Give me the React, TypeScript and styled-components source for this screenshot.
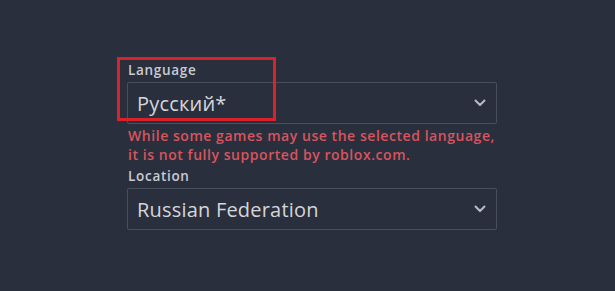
import React from "react";
import styled, { createGlobalStyle } from "styled-components";

const Global = createGlobalStyle`
  html, body { margin: 0; padding: 0; background: #2a2f3e; }
  body { font-family: "Open Sans", Lato, sans-serif; width: 615px; height: 291px; overflow: hidden; }
`;

const Page = styled.div`
  width: 615px;
  height: 291px;
  box-sizing: border-box;
  padding: 62px 0 0 127px;
  display: flex;
  flex-direction: column;
`;

const Field = styled.div`
  position: relative;
  display: flex;
  flex-direction: column;
  width: 370px;
`;

const Label = styled.div`
  font-size: 13.5px;
  font-weight: 600;
  color: #c9cbd0;
  line-height: 17px;
  padding-left: 1px;
  margin-bottom: 3px;
  letter-spacing: 0.7px;
`;

const Select = styled.div`
  height: 42px;
  box-sizing: border-box;
  border: 1.5px solid #4a4f5c;
  border-radius: 2px;
  display: flex;
  align-items: center;
  justify-content: space-between;
  padding: 0 9px 0 9px;
`;

const Value = styled.span`
  font-size: 20px;
  font-weight: 500;
  color: #d4d6da;
  letter-spacing: 0.2px;
`;

const Chevron = styled.svg`
  width: 12px;
  height: 8px;
  margin-right: 1px;
`;

const ErrorText = styled.div`
  font-size: 14px;
  font-weight: 600;
  color: #d9545c;
  line-height: 19px;
  margin-top: 2px;
  padding-left: 1px;
  letter-spacing: 0.55px;
  white-space: nowrap;
`;

const Highlight = styled.div`
  position: absolute;
  left: -10px;
  top: -5px;
  width: 159px;
  height: 64px;
  box-sizing: border-box;
  border: 3px solid #d8232c;
  pointer-events: none;
`;

const Spacer = styled.div`
  height: 4px;
`;

const ChevronIcon = () => (
  <Chevron viewBox="0 0 12 8">
    <path d="M1.5 1.5 L6 6 L10.5 1.5" fill="none" stroke="#b9bcc4" strokeWidth="2" strokeLinecap="round" strokeLinejoin="round" />
  </Chevron>
);

export default function App() {
  return (
    <>
      <Global />
      <Page>
        <Field>
          <Label>Language</Label>
          <Select>
            <Value>Русский*</Value>
            <ChevronIcon />
          </Select>
          <Highlight />
        </Field>
        <ErrorText>
          While some games may use the selected language,
          <br />
          it is not fully supported by roblox.com.
        </ErrorText>
        <Spacer />
        <Field>
          <Label>Location</Label>
          <Select>
            <Value>Russian Federation</Value>
            <ChevronIcon />
          </Select>
        </Field>
      </Page>
    </>
  );
}
